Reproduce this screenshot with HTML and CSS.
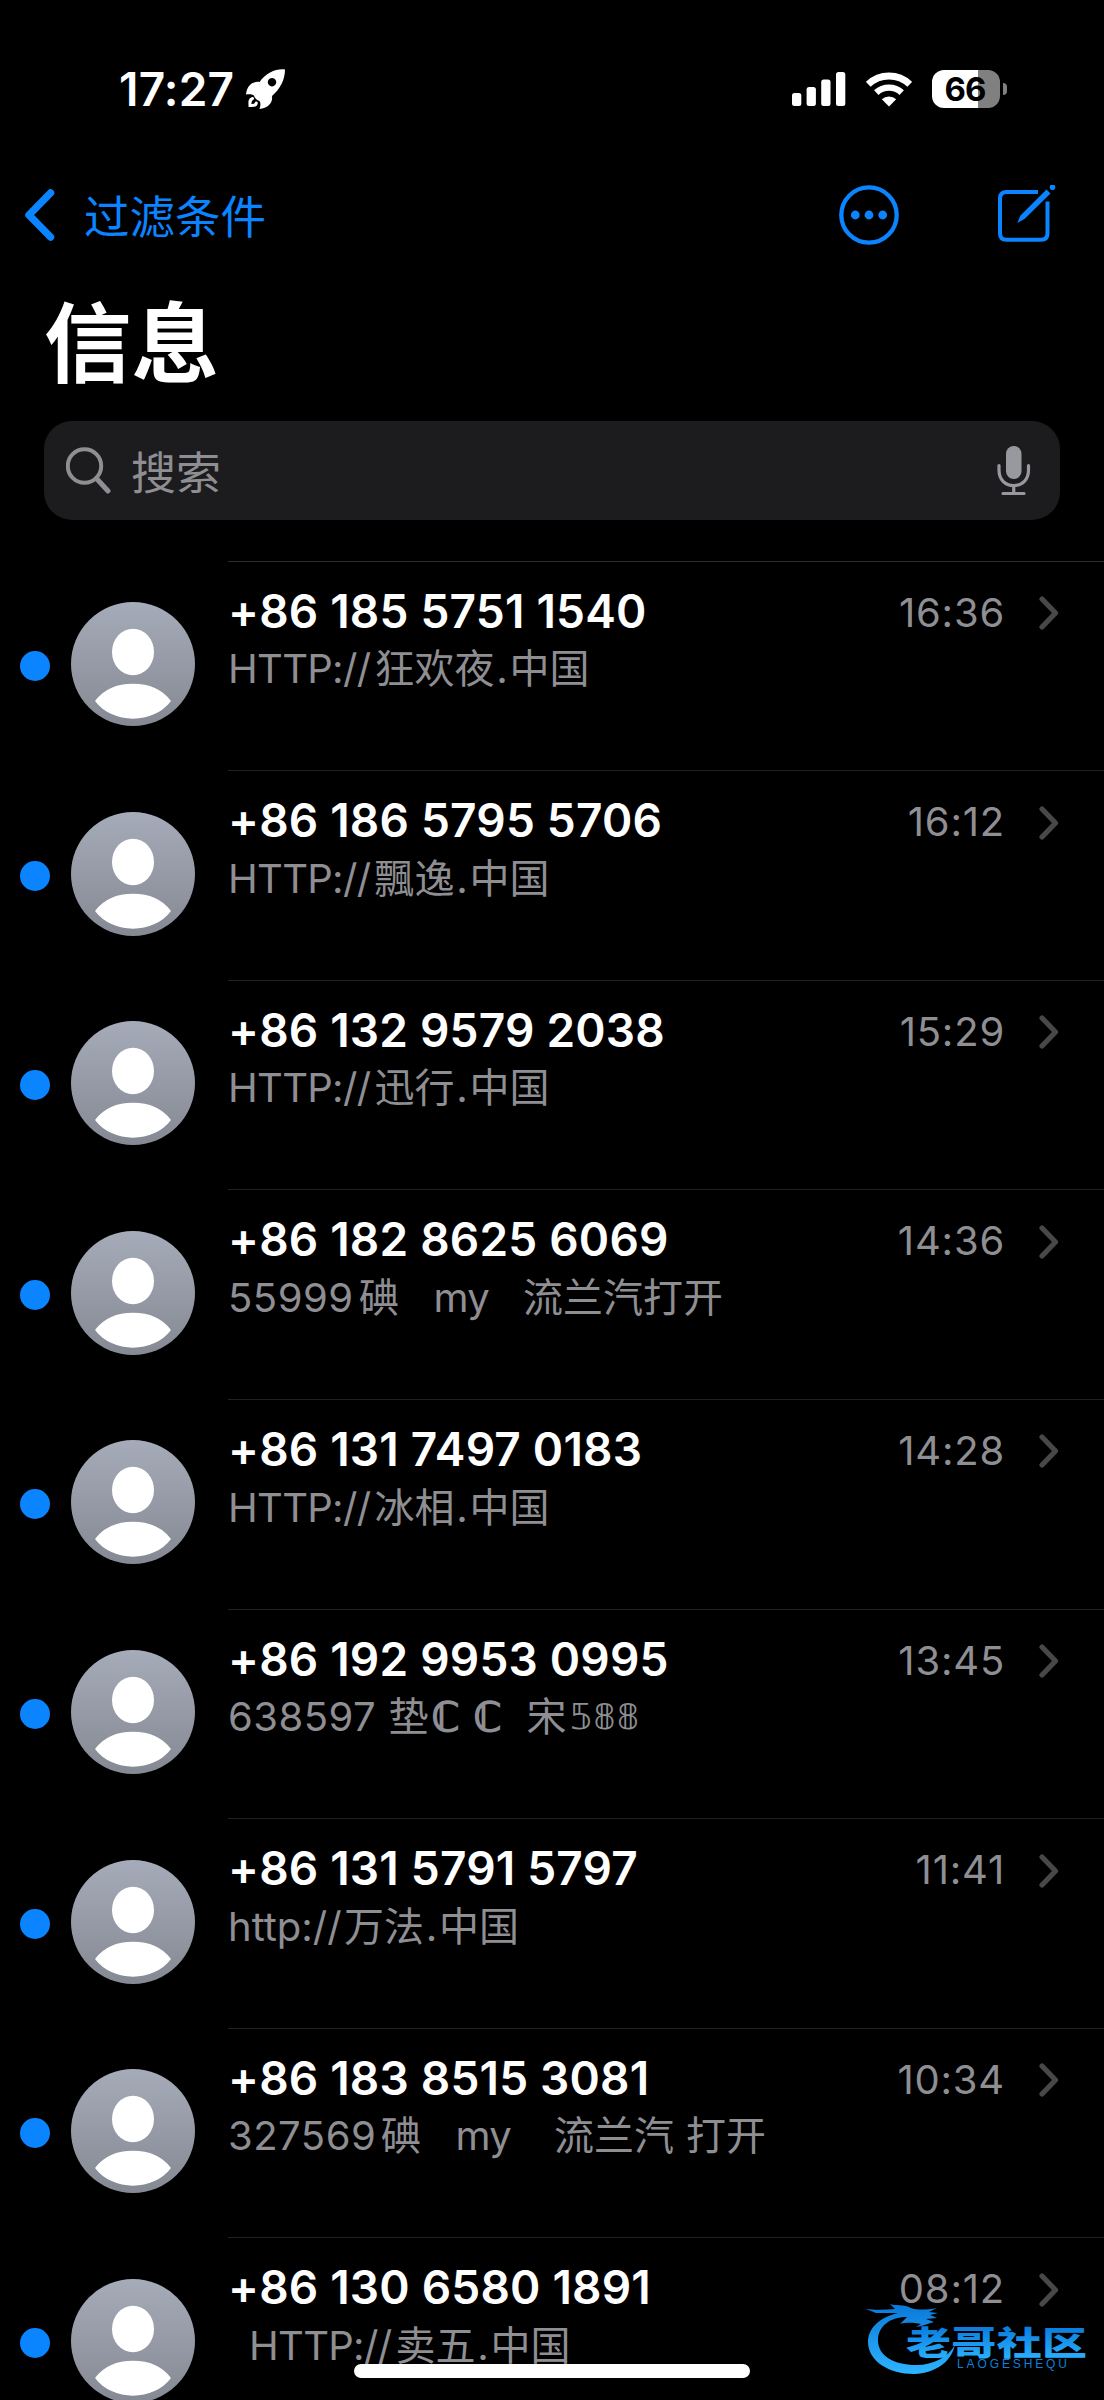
FILE: index.html
```html
<!DOCTYPE html>
<html lang="zh-CN">
<head>
<meta charset="utf-8">
<title>信息</title>
<link rel="stylesheet" href="styles.css">
</head>
<body>
<svg width="0" height="0" class="defs" aria-hidden="true">
  <defs>
    <linearGradient id="face" x1="0" y1="0" x2="0" y2="1"><stop offset="0" stop-color="#a6abb9"/><stop offset="1" stop-color="#858993"/></linearGradient>
    <symbol id="avatar" viewBox="0 0 124 124">
      <circle cx="62" cy="62" r="62" fill="url(#face)"/>
      <ellipse cx="62" cy="50" rx="21" ry="23.2" fill="#fff"/>
      <path d="M25 99C33 88.500 46 82.500 62 82.500S91 88.500 99 99C91 109.500 77 116 62 116S33 109.500 25 99Z" fill="#fff" stroke="#fff" stroke-width="1.500" stroke-linejoin="round"/>
    </symbol>
    <symbol id="chevron" viewBox="0 0 20 34"><path d="M3 3L16.500 17L3 31" fill="none" stroke="#48484a" stroke-width="5.200" stroke-linecap="round" stroke-linejoin="round"/></symbol>
  </defs>
</svg>
<div class="screen">
  <div class="status">
    <span class="clock">17:27</span>
    <svg class="rocket" width="40" height="40" viewBox="0 0 40 40">
      <path fill="#fff" fill-rule="evenodd" d="M39 0.500C30 -0.500 20 4 13.500 13C8 12 1 15 0 25.500C3 25 6 25 8 26.500C8.500 29 11 31.500 13.500 32C15 34 14.500 37 13.500 40C22 39 27 34 26 27C34 20 39 11 39 0.500ZM26 9a4.200 4.200 0 1 0 .01 0Z"/>
      <path fill="none" stroke="#fff" stroke-width="3" stroke-linecap="round" d="M6.500 29.500C3.500 30.500 3.800 33 4 36.500C7.500 36.800 10 36.500 10.300 34"/>
    </svg>
    <svg class="signal" width="54" height="34" viewBox="0 0 54 34" fill="#fff"><rect y="21" width="9.300" height="13" rx="2.500"/><rect x="14.600" y="15" width="9.300" height="19" rx="2.500"/><rect x="29.200" y="7.500" width="9.300" height="26.500" rx="2.500"/><rect x="44" width="9.300" height="34" rx="2.500"/></svg>
    <svg class="wifi" width="46" height="35" viewBox="0 0 46 35"><g fill="none" stroke="#fff"><path d="M2.300 12.300A30 30 0 0 1 43.700 12.300" stroke-width="6.800"/><path d="M10.300 20.700A18.500 18.500 0 0 1 35.700 20.700" stroke-width="6.400"/></g><path fill="#fff" d="M23 34.500L15.800 27.300A10.500 10.500 0 0 1 30.200 27.300Z"/></svg>
    <div class="battery"><span class="level">66</span></div><i class="nub"></i>
  </div>
  <div class="nav">
    <svg width="31" height="54" viewBox="0 0 31 54"><path d="M26.500 5L5 27L26.500 49" fill="none" stroke="#0a84ff" stroke-width="7.500" stroke-linecap="round" stroke-linejoin="round"/></svg>
    <span class="back">过滤条件</span>
    <svg class="more" width="60" height="60" viewBox="0 0 60 60"><circle cx="30" cy="30" r="27.700" fill="none" stroke="#0a84ff" stroke-width="4.300"/><g fill="#0a84ff"><circle cx="16.300" cy="30" r="4.400"/><circle cx="30" cy="30" r="4.400"/><circle cx="43.700" cy="30" r="4.400"/></g></svg>
    <svg class="compose" width="60" height="60" viewBox="0 0 60 60"><path d="M42 7H10.500Q4 7 4 13.500V48.200Q4 54.700 10.500 54.700H45Q51.500 54.700 51.500 48.200V16.500" fill="none" stroke="#0a84ff" stroke-width="4"/><path d="M44.500 4L55 14.500L58 11.500L47.500 1Z" fill="#000"/><path fill="#0a84ff" d="M50.500 4.500L54.500 8.500L28.500 34L21.200 38L24.500 30.500Z"/><circle cx="56.500" cy="2.300" r="2.800" fill="#0a84ff"/></svg>
  </div>
  <h1>信息</h1>
  <div class="search">
    <svg width="45" height="50" viewBox="0 0 45 50"><g fill="none" stroke="#8e8e93"><circle cx="18.500" cy="20" r="16.700" stroke-width="4"/><path d="M30.500 32.500L42 45" stroke-width="5" stroke-linecap="round"/></g></svg>
    <span>搜索</span>
    <svg class="mic" width="34" height="50" viewBox="0 0 34 50"><rect x="9" y="0" width="15.500" height="33" rx="7.750" fill="#98989f"/><path d="M2 19.500V24C2 33.500 8 39.500 16.750 39.500S31.500 33.500 31.500 24V19.500M16.750 40V47.500M6 47.500H27" fill="none" stroke="#98989f" stroke-width="3.200" stroke-linecap="round"/></svg>
  </div>
  <div class="list">
    <div class="row"><i class="dot"></i><svg class="face"><use href="#avatar"/></svg><div class="body"><div class="top"><b>+86 185 5751 1540</b><time>16:36</time><svg class="chev"><use href="#chevron"/></svg></div><p><span class="url">HTTP://</span>狂欢夜<span class="stop">.</span>中国</p></div></div>
    <div class="row"><i class="dot"></i><svg class="face"><use href="#avatar"/></svg><div class="body"><div class="top"><b>+86 186 5795 5706</b><time>16:12</time><svg class="chev"><use href="#chevron"/></svg></div><p><span class="url">HTTP://</span>飄逸<span class="stop">.</span>中国</p></div></div>
    <div class="row"><i class="dot"></i><svg class="face"><use href="#avatar"/></svg><div class="body"><div class="top"><b>+86 132 9579 2038</b><time>15:29</time><svg class="chev"><use href="#chevron"/></svg></div><p><span class="url">HTTP://</span>迅行<span class="stop">.</span>中国</p></div></div>
    <div class="row"><i class="dot"></i><svg class="face"><use href="#avatar"/></svg><div class="body"><div class="top"><b>+86 182 8625 6069</b><time>14:36</time><svg class="chev"><use href="#chevron"/></svg></div><p><span class="num">55999</span>碘<span class="my">my</span>流兰汽打开</p></div></div>
    <div class="row"><i class="dot"></i><svg class="face"><use href="#avatar"/></svg><div class="body"><div class="top"><b>+86 131 7497 0183</b><time>14:28</time><svg class="chev"><use href="#chevron"/></svg></div><p><span class="url">HTTP://</span>冰相<span class="stop">.</span>中国</p></div></div>
    <div class="row"><i class="dot"></i><svg class="face"><use href="#avatar"/></svg><div class="body"><div class="top"><b>+86 192 9953 0995</b><time>13:45</time><svg class="chev"><use href="#chevron"/></svg></div><p><span class="num wide">638597</span>垫<span class="cc">ℂ</span><span class="cc last">ℂ</span>宋<span class="outline">𝟝𝟠𝟠</span></p></div></div>
    <div class="row"><i class="dot"></i><svg class="face"><use href="#avatar"/></svg><div class="body"><div class="top"><b>+86 131 5791 5797</b><time>11:41</time><svg class="chev"><use href="#chevron"/></svg></div><p><span class="url lower">http://</span>万法<span class="stop">.</span>中国</p></div></div>
    <div class="row"><i class="dot"></i><svg class="face"><use href="#avatar"/></svg><div class="body"><div class="top"><b>+86 183 8515 3081</b><time>10:34</time><svg class="chev"><use href="#chevron"/></svg></div><p><span class="num mid">327569</span>碘<span class="my far">my</span>流兰汽<span class="gap"></span>打开</p></div></div>
    <div class="row"><i class="dot"></i><svg class="face"><use href="#avatar"/></svg><div class="body"><div class="top"><b>+86 130 6580 1891</b><time>08:12</time><svg class="chev"><use href="#chevron"/></svg></div><p class="indent"><span class="url">HTTP://</span>卖五<span class="stop">.</span>中国</p></div></div>
  </div>
  <div class="home"></div>
  <svg class="mark" width="236" height="88" viewBox="0 0 236 88">
    <defs><linearGradient id="sea" gradientUnits="userSpaceOnUse" x1="0" y1="8" x2="0" y2="78"><stop offset="0" stop-color="#0a78d8"/><stop offset="1" stop-color="#2db4ff"/></linearGradient><linearGradient id="word" x1="0" y1="0" x2="0" y2="1"><stop offset=".2" stop-color="#0879dc"/><stop offset=".9" stop-color="#2bb0fc"/></linearGradient></defs>
    <path fill="url(#sea)" d="M38 17C17 22 8 34 8 46C8 65 29 78 54 78C76 77 91 66 95 49C88 61 74 69 56 69C34 69 18 60 18 44C18 31 29 21 47 21L40 28C48 26 54 27 61 28L56 31C63 30 70 27 74 26L66 23L77 22L70 19L78 17L69 16L77 12C66 14 57 14 51 12C45 8 34 10 30 8L35 13C25 14 14 14 6 13L16 17L30 17Z"/>
    <g transform="translate(46 58.500) scale(1 .74)"><text x="0" y="0" textLength="181" class="markword" fill="url(#word)">老哥社区</text></g>
    <text x="97" y="71.500" textLength="110" class="markname">LAOGESHEQU</text>
  </svg>
</div>
</body>
</html>
```
FILE: styles.css
```css
* { box-sizing: border-box; }
body { margin: 0; background: #000; }
.defs { position: absolute; }
.screen { position: relative; width: 1104px; height: 2400px; overflow: hidden; background: #000; color: #fff; font-family: Inter, "Noto Sans CJK SC", sans-serif; }
svg { display: block; flex: none; }

.status { display: flex; align-items: center; height: 178px; padding-left: 119px; }
.clock { width: 127px; font-size: 46px; font-weight: 600; letter-spacing: .2px; line-height: 56px; }
.signal { margin-left: 506px; }
.wifi { margin-left: 20px; }
.battery { width: 68px; height: 38px; margin-left: 20px; padding-right: 2px; border-radius: 12px; background: linear-gradient(90deg, #fff 46px, #808080 46px); color: #000; text-align: center; }
.level { font-size: 33px; font-weight: 700; line-height: 38px; letter-spacing: -1px; }
.nub { width: 4px; height: 12px; margin-left: 3px; background: #808080; border-radius: 0 4px 4px 0; }

.nav { display: flex; align-items: center; height: 74px; padding-left: 24px; color: #0a84ff; }
.back { width: 783px; padding: 5px 0 0 29px; font-size: 45.500px; line-height: 60px; font-weight: 400; }
.more { margin-left: 1px; }
.compose { margin-left: 97px; }

h1 { height: 169px; margin: 0; padding: 27px 0 0 44px; font-size: 87.500px; line-height: 130px; font-weight: 700; }

.search { display: flex; align-items: center; width: 1016px; height: 99px; margin-left: 44px; padding: 0 29px 0 22px; border-radius: 28px; background: #1c1c1e; color: #8e8e93; font-size: 45px; }
.search span { padding: 7px 0 0 20px; line-height: 60px; }
.mic { margin-left: auto; }

.list { padding-top: 40.600px; }
.row { display: flex; height: 209.600px; padding-left: 20px; }
.dot { flex: none; width: 30px; height: 30px; margin: 90.400px 21px 0 0; border-radius: 50%; background: #0a84ff; }
.face { width: 124px; height: 124px; margin: 41.400px 33px 0 0; }
.body { flex: 1; border-top: 1px solid #212123; }
.row:first-child .body { border-color: #2e2e30; }
.top { display: flex; align-items: center; height: 98px; padding-right: 45px; }
b { font-size: 46px; font-weight: 600; letter-spacing: .2px; white-space: pre; }
time { margin-left: auto; padding-top: 3px; font-size: 40px; letter-spacing: .8px; color: #8e8e93; }
.chev { width: 20px; height: 34px; margin: 5px 0 0 34px; }
p { display: flex; align-items: center; height: 54px; margin: -17.400px 0 0; font-size: 40px; line-height: 54px; color: #8e8e93; white-space: pre; }
p.indent { margin-left: 21px; }
.url { width: 146.500px; letter-spacing: -.7px; }
.url.lower { width: 116px; letter-spacing: 0; }
.stop { width: 15px; text-align: center; }
.num { width: 131px; letter-spacing: .5px; }
.num.wide { width: 160.500px; }
.num.mid { width: 153px; }
.my { width: 124px; padding-left: 34.500px; letter-spacing: -.8px; }
.my.far { width: 133px; }
.gap { width: 12px; }
.cc { width: 42px; padding-left: 3px; font-family: "DejaVu Sans", sans-serif; font-size: 40px; -webkit-text-stroke: 1.600px #8e8e93; }
.cc.last { width: 56px; }
.outline { padding-left: 3px; font-family: "DejaVu Sans", sans-serif; font-size: 36px; letter-spacing: .6px; }

.home { position: absolute; left: 354px; top: 2364px; width: 396px; height: 14px; border-radius: 7px; background: #fff; }
.mark { position: absolute; left: 860px; top: 2296px; }
.markword { font-family: "Noto Sans CJK SC", sans-serif; font-weight: 900; font-size: 45px; }
.markname { font-family: "Liberation Sans", sans-serif; font-size: 12px; fill: #0f7fd8; }
```
